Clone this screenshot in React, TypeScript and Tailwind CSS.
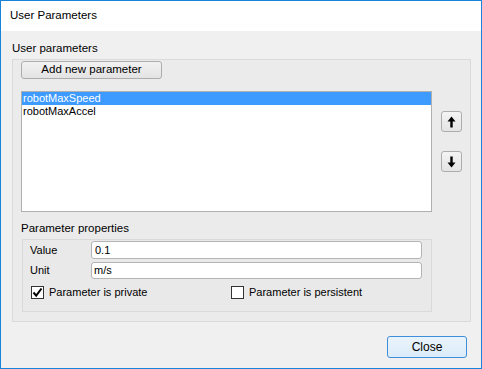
import React from 'react';

const font = { fontFamily: '"Liberation Sans", Arial, sans-serif' };

function Arrow({ down }: { down?: boolean }) {
  return (
    <svg width="9" height="12" viewBox="0 0 9 12" className={down ? 'rotate-180' : ''}>
      <path d="M4.5 0.5 L8.5 5.5 L5.7 5.5 L5.7 11.5 L3.3 11.5 L3.3 5.5 L0.5 5.5 Z" fill="#000" />
    </svg>
  );
}

function Check({ checked, label }: { checked?: boolean; label: string }) {
  return (
    <div className="flex items-center gap-[5px]">
      <div className="w-[13px] h-[13px] border border-[#333] bg-white flex items-center justify-center">
        {checked && (
          <svg width="11" height="11" viewBox="0 0 11 11">
            <path d="M1.5 5.5 L4.2 8.6 L9.5 1.5" stroke="#000" strokeWidth="2" fill="none" />
          </svg>
        )}
      </div>
      <span>{label}</span>
    </div>
  );
}

export default function App() {
  return (
    <div
      className="w-[482px] h-[369px] border border-[#1883d7] bg-[#f0f0f0] flex flex-col text-[11px] text-black"
      style={font}
    >
      <div className="h-[30px] bg-white flex items-center pl-[9px] text-[11.5px]">User Parameters</div>

      <div className="flex-1 flex flex-col pl-[11px] pr-[10px]">
        <div className="h-[16px] mt-[10px] flex items-center text-[11.5px]">User parameters</div>

        <div className="mt-[2px] h-[263px] border border-[#dadada] bg-[#ebebeb] flex flex-col pl-[8px] pr-[8px]">
          <button className="mt-[1px] w-[141px] h-[18px] border border-[#adadad] rounded-[3px] bg-gradient-to-b from-[#f2f2f2] to-[#e3e3e3] flex items-center justify-center text-[11.5px]">
            Add new parameter
          </button>

          <div className="flex mt-[12px]">
            <div className="w-[411px] h-[121px] border border-[#b0b0b0] bg-white flex flex-col">
              <div className="h-[13px] bg-[#3d9bff] text-white flex items-center pl-[1px]">robotMaxSpeed</div>
              <div className="h-[13px] flex items-center pl-[1px]">robotMaxAccel</div>
            </div>
            <div className="flex flex-col ml-[9px] pt-[20px] gap-[19px]">
              <button className="w-[21px] h-[21px] border border-[#adadad] rounded-[3px] bg-gradient-to-b from-[#f4f4f4] to-[#e4e4e4] flex items-center justify-center">
                <Arrow />
              </button>
              <button className="w-[21px] h-[21px] border border-[#adadad] rounded-[3px] bg-gradient-to-b from-[#f4f4f4] to-[#e4e4e4] flex items-center justify-center">
                <Arrow down />
              </button>
            </div>
          </div>

          <div className="h-[16px] mt-[9px] flex items-center text-[11.5px]">Parameter properties</div>

          <div className="mt-[2px] ml-[1px] w-[410px] h-[73px] border border-[#dadada] bg-[#e9e9e9] flex flex-col pl-[7px] pt-[1px]">
            <div className="flex items-center h-[18px]">
              <span className="w-[61px]">Value</span>
              <div className="w-[331px] h-[18px] border border-[#b4b4b4] rounded-[3px] bg-white flex items-center pl-[3px]">0.1</div>
            </div>
            <div className="flex items-center h-[17px] mt-[3px]">
              <span className="w-[61px]">Unit</span>
              <div className="w-[331px] h-[17px] border border-[#b4b4b4] rounded-[3px] bg-white flex items-center pl-[2px]">m/s</div>
            </div>
            <div className="flex items-center mt-[5px] pl-[1px]">
              <div className="w-[200px]">
                <Check checked label="Parameter is private" />
              </div>
              <Check label="Parameter is persistent" />
            </div>
          </div>
        </div>

        <div className="flex justify-end mt-[14px] pr-[4px]">
          <button className="w-[80px] h-[22px] border border-[#3c8fd8] rounded-[3px] bg-gradient-to-b from-[#eaf3fb] to-[#dcecfa] flex items-center justify-center text-[12px]">
            Close
          </button>
        </div>
      </div>
    </div>
  );
}
